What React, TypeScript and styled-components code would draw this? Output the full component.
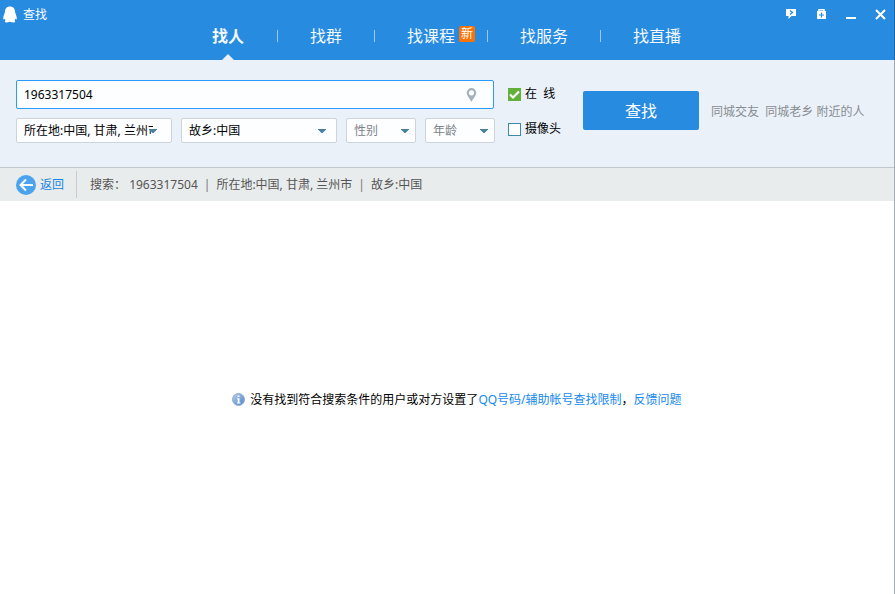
import React from 'react';
import styled, { createGlobalStyle } from 'styled-components';

const GlobalStyle = createGlobalStyle`
  * { box-sizing: border-box; }
  html, body, #root { height: 100%; }
  body {
    margin: 0;
    background: #ffffff;
    color: #000000;
    font: 12px/16px "Noto Sans", "Noto Sans CJK SC", sans-serif;
  }
  button, input, select { font: inherit; color: inherit; }
`;

const Window = styled.div`
  min-height: 100%;
  display: flex;
  flex-direction: column;
  border-right: 1px solid #a3aab0;
`;

const Header = styled.header`
  height: 60px;
  background: #278be0;
  color: #ffffff;
  margin-right: -1px;
  border-right: 1px solid #1c67a8;
`;

const TitleBar = styled.div`
  display: flex;
  align-items: center;
  justify-content: space-between;
  height: 24px;
  padding: 5px 5px 0 3px;
`;

const Title = styled.h1`
  display: flex;
  align-items: center;
  gap: 6px;
  margin: 0;
  font-size: 12px;
  font-weight: 400;
`;

const WindowButtons = styled.div`
  display: flex;
  gap: 14px;
`;

const WindowButton = styled.button`
  display: flex;
  width: 16px;
  height: 16px;
  padding: 0;
  border: 0;
  background: none;
`;

const Tabs = styled.nav`
  display: flex;
  justify-content: center;
  align-items: stretch;
  height: 36px;
  padding-right: 2px;
`;

const Divider = styled.span`
  width: 1px;
  height: 12px;
  margin-top: 6px;
  background: #9cc9ef;
`;

const Tab = styled.a<{ $active?: boolean }>`
  position: relative;
  padding: 0 ${p => (p.$active ? 33 : 32)}px;
  color: #f2f8fd;
  font-size: 16px;
  line-height: 24px;
  font-weight: ${p => (p.$active ? 700 : 400)};
  text-decoration: none;
  white-space: nowrap;
  ${p => p.$active && `
    &::after {
      content: "";
      position: absolute;
      left: 50%;
      bottom: 0;
      margin-left: -6px;
      border: 6px solid transparent;
      border-top-width: 0;
      border-bottom-color: #eaf1f9;
    }
  `}
`;

const NewBadge = styled.span`
  position: absolute;
  top: 2px;
  right: 12px;
  width: 16px;
  height: 16px;
  border-radius: 2px;
  background: #fb7206;
  color: #ffffff;
  font-size: 12px;
  line-height: 16px;
  text-align: center;
`;

const SearchPanel = styled.form`
  display: flex;
  align-items: flex-start;
  padding: 20px 16px 24px;
  border-bottom: 1px solid #c3c8cc;
  background: #eaf1f9;
`;

const Fields = styled.div`
  display: flex;
  flex-direction: column;
  gap: 9px;
  flex: 0 0 479px;
`;

const KeywordBox = styled.label`
  display: flex;
  align-items: center;
  height: 29px;
  margin-right: 1px;
  padding: 0 16px 0 7px;
  border: 1px solid #2b9aff;
  border-radius: 2px;
  background: #fdfeff;
`;

const KeywordInput = styled.input`
  flex: 1;
  min-width: 0;
  padding: 0;
  border: 0;
  outline: 0;
  background: none;
`;

const Filters = styled.div`
  display: flex;
  gap: 9px;
`;

const SelectBox = styled.span<{ $wide?: boolean; $arrow?: number }>`
  display: grid;
  flex: 0 1 ${p => (p.$wide ? 156 : 70)}px;
  min-width: 0;
  height: 25px;
  border: 1px solid #cdd4da;
  border-radius: 2px;
  background: #fdfeff;
  color: ${p => (p.$wide ? '#000000' : '#808488')};
  > * { grid-area: 1 / 1; }
  > svg {
    align-self: center;
    justify-self: end;
    margin-right: ${p => p.$arrow ?? 6}px;
    pointer-events: none;
  }
`;

const Select = styled.select`
  appearance: none;
  width: 100%;
  min-width: 0;
  padding: 0 18px 0 7px;
  border: 0;
  outline: 0;
  background: none;
`;

const Checks = styled.div`
  display: flex;
  flex-direction: column;
  gap: 19px;
  width: 53px;
  margin: 6px 0 0 13px;
`;

const Check = styled.label`
  display: flex;
  align-items: center;
  gap: 4px;
  height: 16px;
  white-space: pre;
`;

const CheckBox = styled.span`
  display: grid;
  flex: none;
  > * { grid-area: 1 / 1; }
  > svg { visibility: hidden; pointer-events: none; }
  > input:checked + svg { visibility: visible; }
`;

const CheckInput = styled.input`
  appearance: none;
  width: 13px;
  height: 13px;
  margin: 0;
  border: 1px solid #3e87b0;
  background: #fdfeff;
  &:checked {
    border-color: #62b13a;
    background: #62b13a;
  }
`;

const SearchButton = styled.button`
  width: 116px;
  height: 39px;
  margin: 11px 12px 0 22px;
  padding: 0;
  border: 0;
  border-radius: 2px;
  background: #278be0;
  color: #ffffff;
  font-size: 16px;
`;

const QuickLinks = styled.div`
  margin-top: 24px;
  color: #888c90;
  white-space: pre;
  a { color: inherit; text-decoration: none; }
`;

const ResultBar = styled.div`
  display: flex;
  align-items: center;
  height: 33px;
  background: #e9ecec;
  color: #555555;
`;

const BackButton = styled.button`
  display: flex;
  align-items: center;
  gap: 4px;
  height: 27px;
  padding: 0 12px 0 16px;
  border: 0;
  border-right: 1px solid #c8cccc;
  background: none;
  color: #1684e6;
`;

const Summary = styled.p`
  display: flex;
  gap: 6px;
  margin: 0 0 0 13px;
  span { color: #777777; }
`;

const Results = styled.main`
  flex: 1;
  display: flex;
  align-items: center;
  justify-content: center;
  padding: 4px 0 0 20px;
`;

const Message = styled.p`
  display: flex;
  align-items: center;
  gap: 5px;
  margin: 0;
  a { color: #1689ee; text-decoration: none; }
`;

const Arrow = () => (
  <svg width="8" height="4" viewBox="0 0 8 4" aria-hidden="true">
    <path d="M0 0h8v.6L4.500 4h-1L0 .6z" fill="#477f9e" />
  </svg>
);

interface FilterProps {
  label: string;
  value: string;
  wide?: boolean;
  arrow?: number;
}

const Filter = ({ label, value, wide, arrow }: FilterProps) => (
  <SelectBox $wide={wide} $arrow={arrow}>
    <Select aria-label={label} defaultValue={value}>
      <option>{value}</option>
    </Select>
    <Arrow />
  </SelectBox>
);

interface OptionProps {
  label: string;
  checked?: boolean;
}

const Option = ({ label, checked }: OptionProps) => (
  <Check>
    <CheckBox>
      <CheckInput type="checkbox" defaultChecked={checked} />
      <svg width="13" height="13" viewBox="0 0 13 13" aria-hidden="true">
        <path d="M2 6.500L5 9.500 11 3.500" fill="none" stroke="#fff" strokeWidth="2.200" />
      </svg>
    </CheckBox>
    {label}
  </Check>
);

export default function App() {
  return (
    <>
      <GlobalStyle />
      <Window>
        <Header>
          <TitleBar>
            <Title>
              <svg width="14" height="17" viewBox="0 0 14 17" aria-hidden="true">
                <path d="M7 .5C3.800.5 2 2.700 2 5.500 2 7.500 0 10 .2 12.800c.2 1 1 .6 1.500-.3.2.8.4 1.200.7 1.700-1 .7-.8 2.300 1 2.300 1.400 0 2.500-.2 3.600-.7 1.100.5 2.200.7 3.600.7 1.800 0 2-1.600 1-2.300.3-.5.5-.9.7-1.700.5.9 1.300 1.300 1.500.3C14 10 12 7.500 12 5.500 12 2.700 10.200.5 7 .5z" fill="#fff" />
              </svg>
              查找
            </Title>
            <WindowButtons>
              <WindowButton type="button" aria-label="反馈">
                <svg width="16" height="16" viewBox="0 0 16 16" fill="none">
                  <path d="M3 2h10v7H8.500l-3 3V9H3z" fill="#fff" />
                  <path d="M7 3.500l2.500 2L7 7.500" stroke="#278be0" strokeWidth="1.300" />
                </svg>
              </WindowButton>
              <WindowButton type="button" aria-label="工具箱">
                <svg width="16" height="16" viewBox="0 0 16 16" fill="none">
                  <path d="M6 4.500V2.800h5v1.700" stroke="#fff" strokeWidth="1.500" />
                  <path d="M4 4h9v8H4z" fill="#fff" />
                  <path d="M8.500 5.500v5M6 8h5" stroke="#278be0" strokeWidth="1.200" />
                </svg>
              </WindowButton>
              <WindowButton type="button" aria-label="最小化">
                <svg width="16" height="16" viewBox="0 0 16 16">
                  <path d="M3 10h10v2H3z" fill="#fff" />
                </svg>
              </WindowButton>
              <WindowButton type="button" aria-label="关闭">
                <svg width="16" height="16" viewBox="0 0 16 16">
                  <path d="M3 3l9 9M12 3l-9 9" stroke="#fff" strokeWidth="2" />
                </svg>
              </WindowButton>
            </WindowButtons>
          </TitleBar>
          <Tabs>
            <Tab href="#people" $active>找人</Tab>
            <Divider />
            <Tab href="#groups">找群</Tab>
            <Divider />
            <Tab href="#courses">找课程<NewBadge>新</NewBadge></Tab>
            <Divider />
            <Tab href="#services">找服务</Tab>
            <Divider />
            <Tab href="#live">找直播</Tab>
          </Tabs>
        </Header>

        <SearchPanel onSubmit={e => e.preventDefault()}>
          <Fields>
            <KeywordBox>
              <KeywordInput aria-label="关键词" defaultValue="1963317504" />
              <svg width="11" height="14" viewBox="0 0 11 14" aria-hidden="true">
                <path d="M5.500 0A4.700 4.700 0 0 0 .8 4.700C.8 8 4 10.500 5.500 14 7 10.500 10.200 8 10.200 4.700A4.700 4.700 0 0 0 5.500 0zm0 2.200a2.600 2.600 0 1 1 0 5.200 2.600 2.600 0 0 1 0-5.200z" fill="#a3b1bd" fillRule="evenodd" />
              </svg>
            </KeywordBox>
            <Filters>
              <Filter label="所在地" value="所在地:中国, 甘肃, 兰州市" wide arrow={14} />
              <Filter label="故乡" value="故乡:中国" wide arrow={10} />
              <Filter label="性别" value="性别" />
              <Filter label="年龄" value="年龄" />
            </Filters>
          </Fields>
          <Checks>
            <Option label={'在\u00a0\u00a0线'} checked />
            <Option label="摄像头" />
          </Checks>
          <SearchButton type="submit">查找</SearchButton>
          <QuickLinks>
            <a href="#friends">同城交友</a>{'  '}<a href="#townsmen">同城老乡</a>{' '}<a href="#nearby">附近的人</a>
          </QuickLinks>
        </SearchPanel>

        <ResultBar>
          <BackButton type="button">
            <svg width="20" height="20" viewBox="0 0 20 20" aria-hidden="true">
              <circle cx="10" cy="10" r="10" fill="#4ba3ed" />
              <path d="M17 10H5M10 4.500L4.500 10 10 15.500" fill="none" stroke="#fff" strokeWidth="2" />
            </svg>
            返回
          </BackButton>
          <Summary>
            搜索： 1963317504<span>|</span>所在地:中国, 甘肃, 兰州市<span>|</span>故乡:中国
          </Summary>
        </ResultBar>

        <Results>
          <Message>
            <svg width="13" height="13" viewBox="0 0 13 13" aria-hidden="true">
              <defs>
                <linearGradient id="info" x1="0" y1="0" x2="1" y2="1">
                  <stop offset="0" stopColor="#b9d2f0" />
                  <stop offset="1" stopColor="#4d80c4" />
                </linearGradient>
              </defs>
              <circle cx="6.500" cy="6.500" r="6" fill="url(#info)" stroke="#8fabd0" />
              <path d="M5.500 2.500h2v1.500h-2zM5 5.200h2.500V9.500H8.500v1h-3.500v-1h.7V6.200H5z" fill="#fff" />
            </svg>
            <span>
              没有找到符合搜索条件的用户或对方设置了<a href="#limit">QQ号码/辅助帐号查找限制</a>，<a href="#feedback">反馈问题</a>
            </span>
          </Message>
        </Results>
      </Window>
    </>
  );
}
